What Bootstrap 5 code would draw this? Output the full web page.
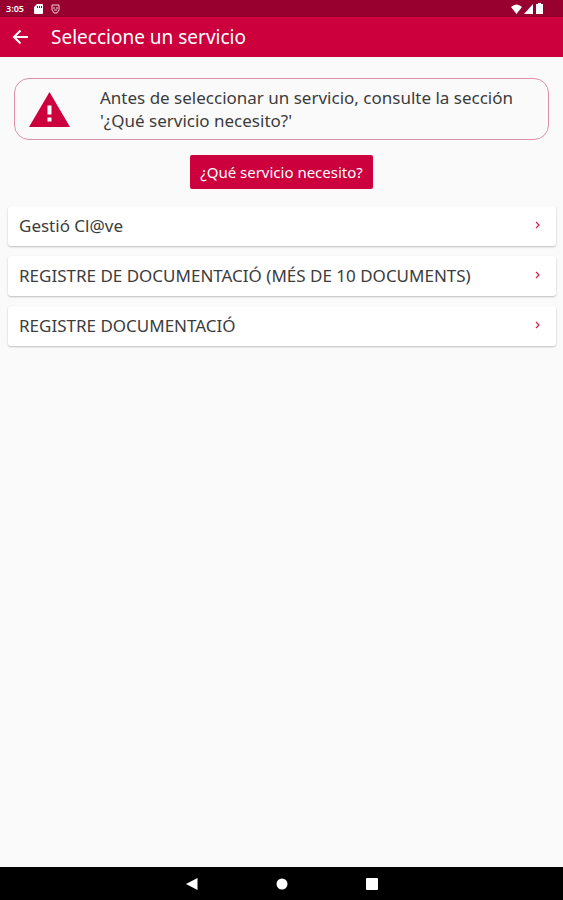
<!DOCTYPE html>
<html lang="es">
<head>
<meta charset="utf-8">
<meta name="viewport" content="width=device-width, initial-scale=1">
<title>Seleccione un servicio</title>
<link href="https://cdn.jsdelivr.net/npm/bootstrap@5.3.0/dist/css/bootstrap.min.css" rel="stylesheet">
<style>
  :root { --brand: #cc003d; --brand-dark: #980030; }
  body { font-family: "Noto Sans", sans-serif; background: #fafafa; color: #3c3c3c; font-size: 17px; line-height: 23px; }
  svg { display: block; flex-shrink: 0; }
  .status-bar { background: var(--brand-dark); height: 17px; padding: 0 19px 0 6px; font-size: 9px; line-height: 17px; font-weight: 600; }
  .status-icons { gap: 2px; }
  .app-bar { background: var(--brand); height: 40px; padding: 0 12px; gap: 22px; }
  .app-bar h1 { font-size: 19px; line-height: 28px; font-weight: 400; }
  .icon-button { border: 0; background: none; color: inherit; padding: 0; }
  .notice { margin: 21px 14px 0; padding: 7px 14px; gap: 30px; border: 1px solid #df8fa5; border-radius: 15px; }
  .help-button { --bs-btn-bg: var(--brand); --bs-btn-hover-bg: var(--brand-dark); --bs-btn-color: #fff; --bs-btn-hover-color: #fff; --bs-btn-border-width: 0; --bs-btn-border-radius: 2px; --bs-btn-padding-x: 10px; --bs-btn-padding-y: 6px; --bs-btn-font-size: 15px; --bs-btn-font-weight: 400; --bs-btn-line-height: 22px; margin: 15px 0 17px; }
  .services { padding: 0 7px 0 8px; gap: 10px; }
  .service { min-height: 40px; padding: 6px 15px 8px 11px; background: #fff; color: #3c3c3c; font-size: 17px; border-radius: 3px; box-shadow: 0 1px 2px rgba(0,0,0,.24); }
  .service svg { color: #d42655; }
  .system-nav { background: #000; height: 33px; gap: 76px; }
</style>
<script src="https://cdn.jsdelivr.net/npm/bootstrap@5.3.0/dist/js/bootstrap.bundle.min.js"></script>
</head>
<body class="d-flex flex-column min-vh-100">
  <div class="status-bar d-flex align-items-center justify-content-between text-white">
    <div class="d-flex align-items-center gap-2">
      <span>3:05</span>
      <svg width="11" height="10" viewBox="0 0 11 10" aria-hidden="true"><path fill="#fff" fill-rule="evenodd" d="M5 0h5q1 0 1 1v8q0 1-1 1H3Q2 10 2 9V3zM5 2v2h1V2zm2 0v2h1V2zm2 0v2h1V2z"/></svg>
      <svg width="9" height="10" viewBox="0 0 9 10" fill="none" stroke="#f5ccd7" aria-hidden="true"><path d="M1 1h7v5L6 9H3L1 6z"/><path d="M2 4h2M5 4h2M3 6h3"/></svg>
    </div>
    <div class="status-icons d-flex align-items-center">
      <svg width="11" height="10" viewBox="0 0 11 10" aria-hidden="true"><path fill="#fff" d="M0 3Q5.500-2 11 3L5.500 10z"/></svg>
      <svg width="9" height="10" viewBox="0 0 9 10" aria-hidden="true"><path fill="#fff" d="M9 0v10H0z"/></svg>
      <svg width="9" height="11" viewBox="-1 0 9 11" aria-hidden="true"><path fill="#fff" d="M2 0h3v1h2v10H0V1h2z"/></svg>
    </div>
  </div>
  <header class="app-bar d-flex align-items-center text-white">
    <button type="button" class="icon-button" aria-label="Volver"><svg width="17" height="16" viewBox="0 0 17 16" fill="none" stroke="currentColor" stroke-width="2"><path d="M16 8H2.500M8.500 1.500 2 8l6.500 6.500"/></svg></button>
    <h1 class="m-0">Seleccione un servicio</h1>
  </header>
  <main class="flex-grow-1">
    <div class="notice d-flex align-items-center" role="note">
      <svg width="41" height="35" viewBox="0 0 41 35" aria-hidden="true"><path fill="#cc003d" d="M20.500 0 41 35H0z"/><path fill="#fff" d="M18.500 13.500h4v9h-4zm0 12h4v4h-4z"/></svg>
      <p class="m-0">Antes de seleccionar un servicio, consulte la sección '¿Qué servicio necesito?'</p>
    </div>
    <div class="text-center"><button type="button" class="btn help-button">¿Qué servicio necesito?</button></div>
    <nav class="services d-flex flex-column" aria-label="Servicios">
      <a href="#" class="service d-flex align-items-center justify-content-between text-decoration-none"><span>Gestió Cl@ve</span><svg width="6" height="8" viewBox="0 0 6 8" fill="none" stroke="currentColor" stroke-width="1.300"><path d="m1 1 3 3-3 3"/></svg></a>
      <a href="#" class="service d-flex align-items-center justify-content-between text-decoration-none"><span>REGISTRE DE DOCUMENTACIÓ (MÉS DE 10 DOCUMENTS)</span><svg width="6" height="8" viewBox="0 0 6 8" fill="none" stroke="currentColor" stroke-width="1.300"><path d="m1 1 3 3-3 3"/></svg></a>
      <a href="#" class="service d-flex align-items-center justify-content-between text-decoration-none"><span>REGISTRE DOCUMENTACIÓ</span><svg width="6" height="8" viewBox="0 0 6 8" fill="none" stroke="currentColor" stroke-width="1.300"><path d="m1 1 3 3-3 3"/></svg></a>
    </nav>
  </main>
  <footer class="system-nav d-flex align-items-center justify-content-center text-white">
    <button type="button" class="icon-button" aria-label="Atrás"><svg width="14" height="14" viewBox="0 0 14 14"><path fill="currentColor" d="M12.500 1v12L1 7z"/></svg></button>
    <button type="button" class="icon-button" aria-label="Inicio"><svg width="14" height="14" viewBox="0 0 14 14"><circle fill="currentColor" cx="7" cy="7" r="5.500"/></svg></button>
    <button type="button" class="icon-button" aria-label="Recientes"><svg width="14" height="14" viewBox="0 0 14 14"><rect fill="currentColor" x="1" y="1" width="12" height="12" rx="1"/></svg></button>
  </footer>
</body>
</html>
